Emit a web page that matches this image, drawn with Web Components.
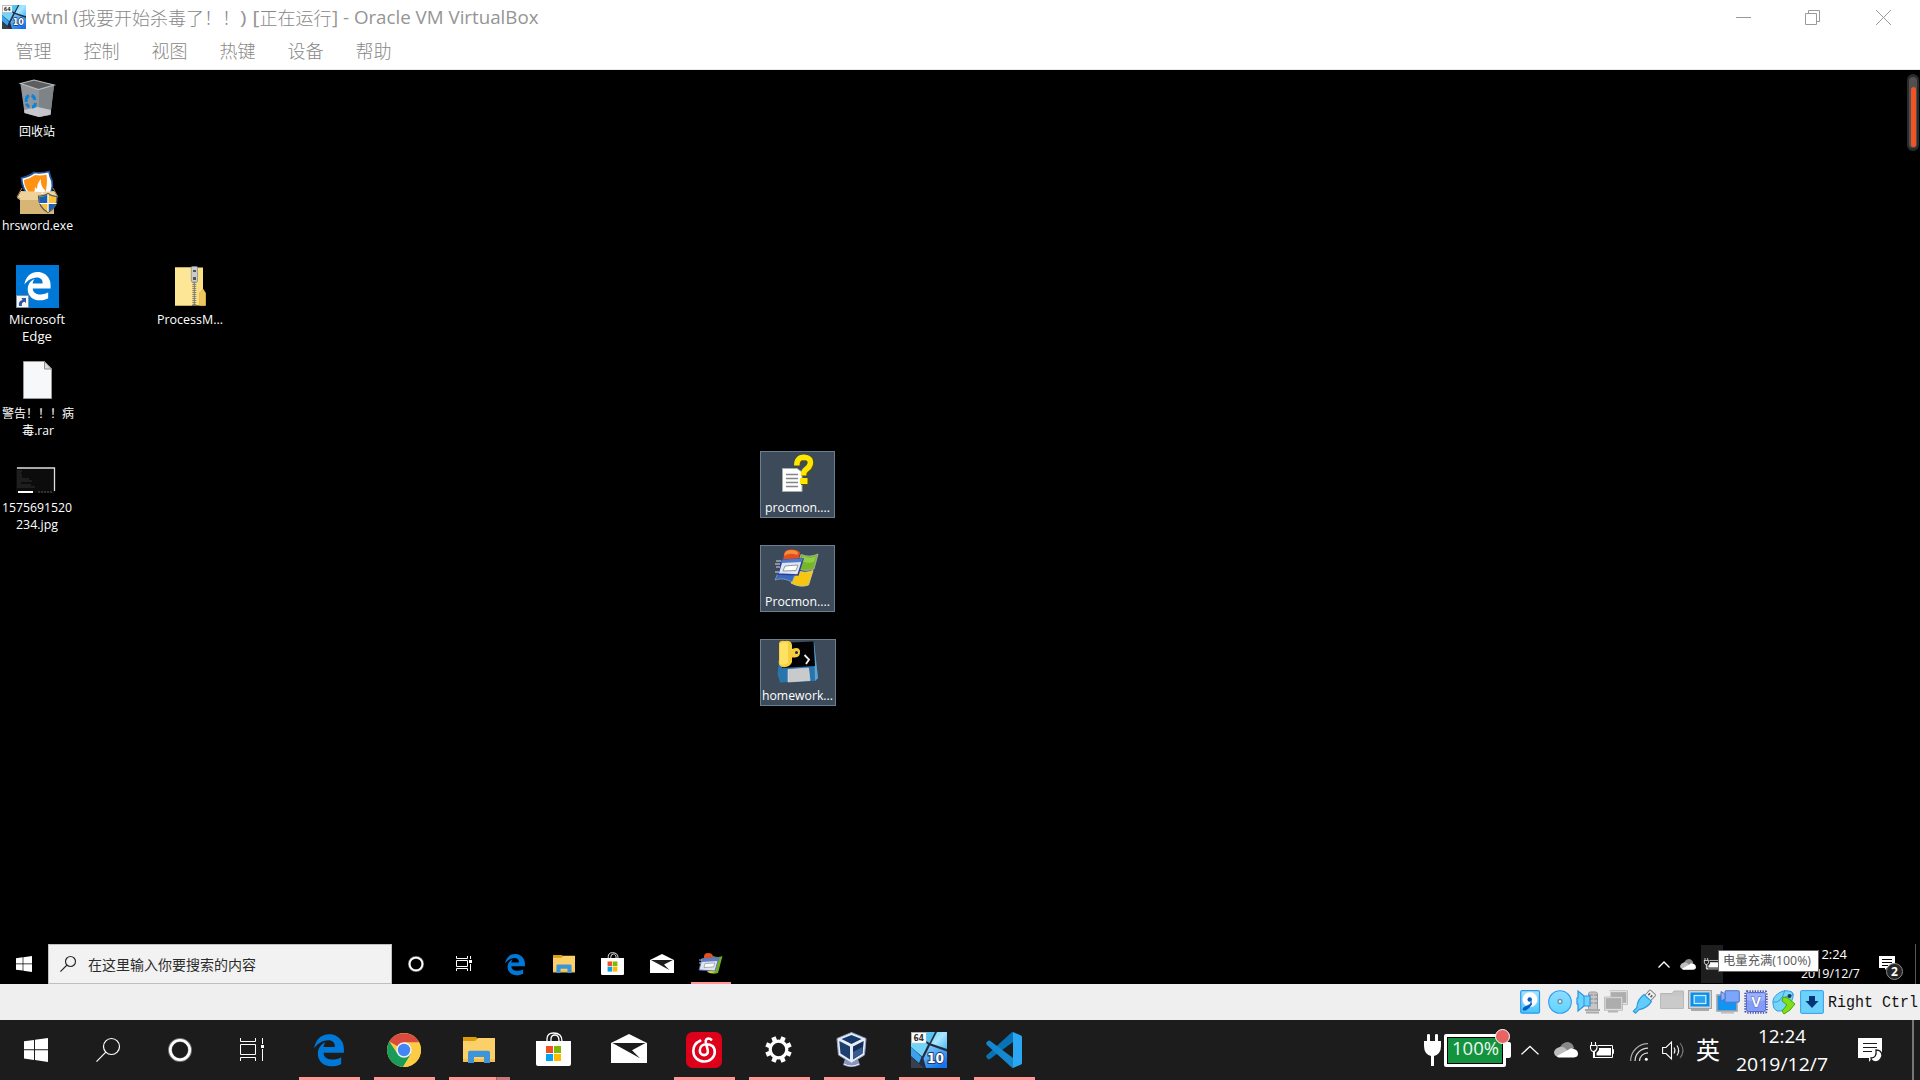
<!DOCTYPE html>
<html lang="zh-CN">
<head>
<meta charset="utf-8">
<title>wtnl - Oracle VM VirtualBox</title>
<style>
html,body{margin:0;padding:0;width:1920px;height:1080px;overflow:hidden;background:#000}
</style>
</head>
<body>
<desktop-screen></desktop-screen>
<script>
const EDGE='M25.714 228.163c.111-.162.23-.323.342-.485-.021.162-.045.323-.065.485H25.714zm460.572 15.508c0-44.032-7.754-84.465-28.801-122.405C416.498 47.879 343.912 8.001 258.893 8.001 118.962 7.724 40.617 113.214 26.056 227.679c42.429-61.312 117.073-121.376 220.375-124.966 0 0 109.666 0 99.419 104.957H169.997c6.369-37.386 18.554-58.986 34.339-78.926-75.048 34.893-121.85 96.096-120.742 188.315.83 71.448 50.124 144.836 120.743 171.976 83.357 31.847 192.776 7.2 240.132-21.324V363.307c-80.864 56.494-270.871 60.925-272.255-67.572h314.073v-52.064z';
const WINFLAG=`<path d="M24 5Q24 1 31 .5Q39 .5 40 4L38 12H23Z" fill="#e2501c"/><path d="M25 4Q26 1 31 1Q37 1 38 4L37 6Q30 3 24 7Z" fill="#f98c3c"/>
<path d="M41 5.500Q50 9 58 5L54 20Q46 23 37 19.500Z" fill="#76b72a" stroke="#a9b3a3" stroke-width=".9"/><path d="M43 7Q50 10 56 7.500L54 13Q48 15 41 12Z" fill="#93cd45"/><path d="M37 21.500Q45 25 53 21.500L48.500 36Q40 39 31 34Z" fill="#f6c611" stroke="#d8ce98" stroke-width=".9"/>
<path d="M18 24L35 26L32 33Q23 28 15 31Z" fill="#3969bb" stroke="#93a6c8" stroke-width=".7"/><path d="M22 11L43 10L38 26L18 25Z" fill="#dfe5f2" stroke="#2a3e99" stroke-width="1.500"/><path d="M22 10.500L43 9.500L42 13L21 14Z" fill="#5177c8"/><path d="M25 17L38 16L36 21.500L23 22Z" fill="#fff" stroke="#8b9b9b" stroke-width="1"/>
<path d="M16 12h5M15 15h5M16 18h4M15 23h4" stroke="#d6dde0" stroke-width="1"/>`;
const I={
vm:['0 0 36 36',`<defs><linearGradient id="g" x1="0" y1="0" x2="1" y2="1"><stop offset="0" stop-color="#6ad0f6"/><stop offset=".45" stop-color="#a9e8ff"/><stop offset="1" stop-color="#4db6f6"/></linearGradient><linearGradient id="k" x1="0" y1="0" x2=".6" y2="1"><stop offset="0" stop-color="#8bd6fb"/><stop offset="1" stop-color="#1573ee"/></linearGradient></defs><rect width="36" height="36" rx="1" fill="#222c42"/><path d="M0 11H15L17 12.500L11 24.500L0 15Z" fill="#74d3f8"/><path d="M15 0H24L18.500 11L15 9Z" fill="#58c3ee"/><path d="M26 0H36V17L20 11.500Z" fill="url(#g)"/><path d="M19 13.500L36 19.500V36H15L12.500 26.500Z" fill="url(#k)"/><path d="M0 15L10.500 25L8 31L0 24Z" fill="#3aa2ef"/><path d="M0 25L13 36H0Z" fill="#39404d"/><rect x=".5" y=".5" width="14.500" height="10.500" fill="#fff" stroke="#ccc" stroke-width=".5"/><text x="2.500" y="9.300" font-family="DejaVu Sans" font-weight="bold" font-size="8.500" textLength="10.500" lengthAdjust="spacingAndGlyphs" fill="#333">64</text><text x="16" y="30.500" font-family="DejaVu Sans" font-weight="bold" font-size="14" textLength="17" lengthAdjust="spacingAndGlyphs" fill="#fff" stroke="#1e3868" stroke-width="2" paint-order="stroke">10</text>`],
win:['0 0 24 24',`<path fill="#fff" d="M0 3.3L10 2V11.3H0ZM11 1.8L24 0V11.3H11ZM0 12.3H10V21.9L0 20.5ZM11 12.3H24V24L11 22.1Z"/>`],
search:['0 0 24 24',`<g fill="none" stroke="currentColor" stroke-width="1.2"><circle cx="15.5" cy="8.5" r="8"/><path d="M9.8 14.2L.5 23.7"/></g>`],
search2:['0 0 16 16',`<g fill="none" stroke="currentColor" stroke-width="1.2"><circle cx="10.5" cy="5.5" r="5"/><path d="M7 9L.4 15.6"/></g>`],
ring:['0 0 24 24',`<circle cx="12" cy="12" r="10" fill="none" stroke="#777" stroke-width="4"/><circle cx="12" cy="12" r="9.7" fill="none" stroke="#fff" stroke-width="2.6"/>`],
tasks:['0 0 24 24',`<g fill="none" stroke="#fff" stroke-width="1"><path d="M.5 0V3.5H15.5V0M.5 23V19.5H15.5V23M.5 6.5H15.5V16.5H.5ZM22.5 0V6M22.5 11V23"/><path d="M21 7h3v3h-3z" fill="#fff" stroke="none"/></g>`],
tasks2:['0 0 16 16',`<g fill="none" stroke="#fff" stroke-width="1"><path d="M.5 0V2.5H11.5V0M.5 15V12.5H11.5V15M.5 4.5H11.5V10.5H.5ZM14.5 0V3M14.500 8V15"/><path d="M13 4h3v3h-3z" fill="#fff" stroke="none"/></g>`],
edge:['24 6 464 494',`<path fill="#0078d7" d="${EDGE}"/>`],
explorer:['0 0 32 26',`<path d="M0 0H13L16 3V8H0Z" fill="#dd9a09"/><path d="M0 4H12L15 1H32V25H0Z" fill="#fbd068"/><path d="M0 22H32V25H0Z" fill="#f3c04f"/><path d="M5 26V15.5Q5 13.7 7 13.7H25Q27 13.7 27 15.5V26H21V20H11V26Z" fill="#3c95da"/>`],
store:['0 0 35 34',`<g fill="none" stroke="#fff" stroke-width="1.3"><path d="M11 10V7Q11 1 17.5 1Q26 1 26 9M15 10V7Q15 3 19 3Q23 3 23 9"/></g><path d="M0 9H35V32Q35 34 33 34H2Q0 34 0 32Z" fill="#fff"/><path fill="#f25022" d="M10 14h7v7h-7z"/><path fill="#7fba00" d="M18 14h7v7h-7z"/><path fill="#00a4ef" d="M10 22h7v7h-7z"/><path fill="#ffb900" d="M18 22h7v7h-7z"/>`],
mail:['0 0 36 29',`<path fill="#fff" d="M0 9L18 0L36 9V29H0Z"/><path fill="#1c1c1c" d="M1.500 9H34.500L21 16.200L29 24.300Z"/>`],
chrome:['0 0 34 34',`<circle cx="17" cy="17" r="17" fill="#fccb3f"/><path d="M17 17L2.3 8.5A17 17 0 0 1 31.7 8.7L32.2 9.5H17Z" fill="#db4a3e"/><path d="M2.3 8.5A17 17 0 0 0 16 34L24 21L10 20Z" fill="#179c59"/><path d="M17 9.5H32.2A17 17 0 0 1 16 34L24 21Z" fill="#fdcc44"/><circle cx="17" cy="17" r="7.7" fill="#f1f1f1"/><circle cx="17" cy="17" r="6.2" fill="#4285f4"/>`],
netease:['0 0 36 36',`<rect width="36" height="36" rx="6.5" fill="#dd001b"/><path fill="none" stroke="#fff" stroke-width="2.6" stroke-linecap="round" d="M14.2 8.7C9.6 10.8 7.3 14.6 7.3 19C7.3 25 12 29.5 18.3 29.5C24.2 29.5 28.8 25 28.8 20C28.8 14.5 25 12.2 20.7 12.2C16.4 12.2 13.8 15 13.8 18.5C13.8 21.4 15.8 23.1 18.1 23.1C20.5 23.1 22.3 21.2 21.8 18.5L19.8 10.2C19.3 7.7 20.9 6.5 22.7 6.5C23.9 6.5 24.7 7 25.2 7.6"/>`],
gear:['0 0 27 27',`<circle cx="13.5" cy="13.5" r="8.3" fill="none" stroke="#fff" stroke-width="3.2"/><g stroke="#fff" stroke-width="4.6">${[22.5,67.5,112.5,157.5,202.5,247.5,292.5,337.5].map(a=>`<path d="M13.5 .2V4.6" transform="rotate(${a} 13.5 13.5)"/>`).join('')}</g>`],
vbox:['0 0 31 35',`<path d="M9 27L22 27L24 33Q15 37 7 33Z" fill="#8796bd"/><path d="M8 32Q15 36 23 32" stroke="#eef" fill="none"/><path d="M15.5 .5L30 6.5L28.5 23L15.5 31L2.5 23L1 6.5Z" fill="#e7edf7" stroke="#8fa1c5" stroke-width="1"/><path d="M15.5 3L25.5 7L15.5 12L5.5 7Z" fill="#16396c"/><path d="M3.3 9L14 14.5V27.5L4.5 21.5Z" fill="#1d3f70"/><path d="M27.7 9L17 14.5V27.5L26.5 21.5Z" fill="#132f5a"/><path d="M17 27V20L26.5 15V21.5Z" fill="#365b91"/>`],
code:['0 0 36 36',`<path d="M27 0L35 3.5Q36 4 36 5V31Q36 32 35 32.5L27 36Z" fill="#2aa6f2"/><path d="M27 10L4 27Q3 27.8 2 27L.5 25.5Q-.3 24.2.7 23.2L25.5 .6L27 0Z" fill="#0673b7"/><path d="M27 26L4 8.8Q3 8.2 2 9L.5 10.5Q-.3 11.7.7 12.7L25.5 35.3L27 36Z" fill="#1588cd"/>`],
plug:['0 0 17 33',`<path fill="#fff" d="M3 1Q3 0 4.5 0T6 1V7H11V1Q11 0 12.5 0T14 1V7H17V12Q17 20 10 22V32H7V22Q0 20 0 12V7H3Z"/>`],
chev:['0 0 18 11',`<path d="M.5 10.3L9 1.5L17.5 10.3" fill="none" stroke="#fff" stroke-width="1.5"/>`],
chev2:['0 0 12 7',`<path d="M.5 6.500L6 1L11.500 6.500" fill="none" stroke="#fff" stroke-width="1.400"/>`],
cloud:['0 0 24 16',`<path d="M6 5Q9 0 14 0Q19 1 20 6L12 9L2 8Z" fill="#888"/><path d="M4 15Q0 14 0 10Q1 6 6 5Q10 4 13 8L20 11L13 15Z" fill="#bdbdbd"/><path d="M3 14L14 8Q17 5 20 7Q24 8 24 12Q24 15 20 15.5H5Q3.7 15.5 3 14Z" fill="#fff"/>`],
batt:['0 0 24 17',`<g fill="none" stroke="#fff"><path d="M8 3.5H22.5V15.5H4.5V10M22.5 7.5H23.5V11.5H22.5" stroke-width="1"/><path d="M1.5 0V3M5.5 0V3M0 3.5H7V6Q6 9.5 3.5 9.5Q1 9.5.5 6V3.5M3.5 9V15.5H6" stroke-width="1.1"/></g><path d="M9 6H21V13.5H6.5V11L9 8Z" fill="#fff"/>`],
wifi:['0 0 18 18',`<g fill="none"><path d="M.6 18A17.5 17.5 0 0 1 18 .6" stroke="#aaa" stroke-width="1.2"/><path d="M5 18A13 13 0 0 1 18 5.2M9.5 18A8.5 8.5 0 0 1 18 9.8" stroke="#ddd" stroke-width="1.2"/></g><circle cx="16.3" cy="16.3" r="1.5" fill="#fff"/>`],
sound:['0 0 23 19',`<path d="M.6 6.5H4L9.5 1V18L4 12.5H.6Z" fill="none" stroke="#fff" stroke-width="1.1"/><g fill="none" stroke-width="1.1"><path d="M12 6.5Q14 9.5 12 12.5M15 4.5Q18.3 9.5 15 14.5" stroke="#eee"/><path d="M18 2Q24 9.5 18 17" stroke="#777"/></g>`],
note:['0 0 24 25',`<path d="M0 0H24V20H14L11 24V20H0Z" fill="#fff"/><path d="M5 5.5H19M5 9.5H19M5 13.5H14" stroke="#1c1c1c"/><path d="M18 12Q24 12 24 18Q22 24 17 24Q13 23 13 20Q19 20 18 12Z" fill="#fff" stroke="#1c1c1c" stroke-width="1.3"/>`],
note2:['0 0 28 28',`<path d="M2 2H18V14H10L8 16V14H2Z" fill="#fff"/><path d="M5 5.5H15M5 8.5H15M5 11.5H11" stroke="#000"/><circle cx="17.5" cy="17.5" r="8" fill="#252525" stroke="#8c8c8c" stroke-width="1"/><text x="17.5" y="21.8" text-anchor="middle" font-family="Open Sans" font-size="12" font-weight="bold" fill="#fff">2</text>`],
disk:['0 0 24 24',`<defs><linearGradient id="g" x2="0" y2="1"><stop stop-color="#a5e5ff"/><stop offset="1" stop-color="#45c6fb"/></linearGradient></defs><rect x=".7" y=".7" width="18.800" height="22.5" rx="1.5" fill="url(#g)" stroke="#2c98ea" stroke-width="1.2"/><circle cx="10" cy="9.5" r="7.700" fill="#fff" stroke="#9cd0f3" stroke-width=".6"/><circle cx="9.700" cy="9.5" r="2.2" fill="#0760c4"/><path d="M3 20.500Q1.500 18 5 16.500L10 14L11.300 10L12 14.500Q9 19 6 20.5Z" fill="#0760c4"/>`],
cd:['0 0 24 24',`<defs><linearGradient id="g" x2="0" y2="1"><stop stop-color="#8ddcff"/><stop offset="1" stop-color="#5fd5ff"/></linearGradient></defs><circle cx="12" cy="12" r="11.3" fill="url(#g)" stroke="#329ceb" stroke-width="1.1"/><circle cx="12" cy="11.5" r="2" fill="#eef7fb" stroke="#6b91a6" stroke-width="1.3"/>`],
audio:['0 0 24 24',`<rect x="12.5" y="2" width="9" height="18" rx="2" fill="#c6c6c6" stroke="#999"/><path d="M12 5h5M12 9h5M12 13h5M18 5h4M18 9h4M18 13h4" stroke="#888"/><path d="M9 20H24M10 22.5H23" stroke="#aaa" stroke-width="1.8"/><path d="M1 8H2V1L8 6H14V16H8L2 21V14H1Z" fill="#67d3ff" stroke="#3190df" stroke-width="1.2"/><path d="M8 6V16" stroke="#3190df"/>`],
net:['0 0 24 24',`<g fill="#adadad" stroke="#e9e9e9" stroke-width="1.2"><rect x="6" y="1.5" width="17" height="12"/><rect x="1" y="7.5" width="17" height="12"/></g><path d="M5.5 .7H23.5V14.5H19M.5 7H18.5V20.3H.5Z" fill="none" stroke="#b3b3b3" stroke-width=".8"/><path d="M4 21.5H14" stroke="#b5b5b5" stroke-width="2"/>`],
usb:['0 0 24 24',`<g transform="rotate(43 12 12)"><rect x="8" y="-1.200" width="8" height="8" rx="1" fill="#f2f2f2" stroke="#888"/><path d="M10.500 1.500V4M13.500 1.500V4" stroke="#555" stroke-width="1.500"/><path d="M7 6.500H17Q18.800 14 13.500 21V26H10.500V21Q5.200 14 7 6.500Z" fill="#62cdfb" stroke="#3198df" stroke-width="1.2"/></g>`],
folder:['0 0 24 24',`<path d="M.6 3.5H12L14 1H23.4V18.4H.6Z" fill="#c6c6c6" stroke="#b5b5b5"/><path d="M1 6H23V18H1Z" fill="#cacaca"/>`],
display:['0 0 24 24',`<rect x=".6" y=".6" width="22.8" height="17.8" fill="#d9d9d9" stroke="#999"/><path d="M3 20H21" stroke="#aaa" stroke-width="2"/><rect x="2.5" y="2.5" width="19" height="14" fill="#0a8de9"/><rect x="6.2" y="5.5" width="11.6" height="8" fill="#26a3f3" stroke="#c6e9ff" stroke-width="1.3"/>`],
rec:['0 0 24 24',`<rect x="1" y="5" width="20" height="16" fill="#1494f2" stroke="#a5a5a5" stroke-width="1.6"/><path d="M5 22.8H18" stroke="#bbb" stroke-width="1.5"/><rect x="9" y=".7" width="14.3" height="11.5" rx=".8" fill="#7aa6fb" stroke="#5573c1"/><path d="M5 1.5L9 4V9L5 11Z" fill="#8eb1f9" stroke="#5573c1"/>`],
cpu:['0 0 24 24',`<rect x="1.4" y="1.4" width="21.2" height="21.2" rx="1.500" fill="none" stroke="#4754ae" stroke-width="2.2" stroke-dasharray="1.3 1.300"/><rect x="2.5" y="2.5" width="19" height="19" rx="2" fill="#829cf8" stroke="#5a69cc"/><path d="M3 3.500H21V10Q12 13 3 10Z" fill="#9bb1fc"/><text x="12" y="17" text-anchor="middle" font-family="Liberation Sans" font-weight="bold" font-size="14.500" fill="#fff" stroke="#5767ba" stroke-width="1" paint-order="stroke">V</text>`],
mouse:['0 0 24 24',`<path d="M1 14Q0 7 7 3Q13-1 20 2Q23 6 18 14Q13 22 5 21Q1 19 1 14Z" fill="#75d6fa" stroke="#369de3"/><path d="M1 12Q9 14 13 0M13 7Q18 7 22 4" stroke="#369de3" fill="none"/><circle cx="17.5" cy="6" r="2" fill="#123c65"/><path d="M11 7L16 8L23 14L18 20L12 24L10 21L15 15L10 11Z" fill="#80df17" stroke="#48a808"/>`],
down:['0 0 24 24',`<rect x=".6" y=".6" width="22.8" height="22.8" rx="1" fill="#6bd2fc" stroke="#3d9de9"/><path d="M9 6H15V11H18.500L12 18L5.500 11H9Z" fill="#063575"/>`],
/* compact process-monitor glyph for the small taskbar */
flag:['0 0 24 22',`<path d="M5 4Q5 0 9 0Q14 0 14 4V6H5Z" fill="#e8501a"/><path d="M14 3Q19 5 23.500 3L19 20Q14 22 8 19L12 8Z" fill="#6fae22"/><path d="M19 8L16 19Q12 21 9 19L12 15Z" fill="#f0dc1c"/><path d="M3 5.500L20 4.500L16 18L0 17Z" fill="#dde4f1" stroke="#4b60a8" stroke-width=".9"/><path d="M3 5.500L20 4.500L19 8L2 9Z" fill="#5f7cc6"/><path d="M6 10.500L16 10L14.500 14L5 14.500Z" fill="#fff" stroke="#999" stroke-width=".8"/><path d="M0 7h3M0 10h2" stroke="#ccc" stroke-width=".9"/>`],
/* Desktop icons share one 75x48 canvas: the upper part of a desktop tile */
bin:['0 0 75 48',`<path d="M20.500 9L38 14L54 10L50.500 40L39 42L24.500 38Z" fill="#92969a"/><path d="M39 14L54 10L50.500 39.500L39 42Z" fill="#7e8387"/><path d="M20.500 8.500L34 5L54 10L38.500 14.500Z" fill="#5d5e60" stroke="#b7bbbd" stroke-width="1.200"/><path d="M24 35L38 32L51 35L50.500 39.500L39 42L24.500 38Z" fill="#cfd1d3" opacity=".85"/><path d="M26.300 27Q25.500 22 29 20.500M31.500 20.500Q34.500 21.500 34.800 25M35.500 28Q35 32 32 32M29.500 31.500Q27 31 26.500 28.500" fill="none" stroke="#0c83d9" stroke-width="3"/>`],
hr:['0 0 75 48',`<path d="M21.500 9Q30 7 34 3.500Q42 4.500 49 2.500Q50 8 52 12Q54 22 46 31L30 29Q22 20 21.500 9Z" fill="#fff" stroke="#1c5599" stroke-width="1.700"/><path d="M24 11Q31 9 35 6Q41 7 46.500 5.500Q48 15 45 25H30Q24 18 24 11Z" fill="#ff9212"/><path d="M33 26Q35 22 35 18L37 20Q37 14 41 10Q40 17 45 21L46 26Z" fill="#fff"/><path d="M20 25H54V45H20Z" fill="#d7b574"/><path d="M21 22L17 29L20 31H40L42 23ZM42 23L54 22L58 28L50 32Z" fill="#efd29a"/><path d="M20 30L17 28L22 19M53 19L58 28" stroke="#a18754" fill="none"/><path d="M38.500 27Q45 27 48 24.500Q51 27 57 27.500Q58 38 48 43.500Q38 38 38.500 27Z" fill="#fac23b" stroke="#4c5b67" stroke-width="1.2"/><path d="M39.200 28Q45 27.500 47.400 25.500V34H40Q39 31 39.200 28ZM48.500 35H55.5Q53.5 40 48.5 42.500Z" fill="#1561ba"/><path d="M48 25V43M39.500 34.5H56.500" stroke="#fff" stroke-width="1.1"/>`],
edgebig:['0 0 75 48',`<rect x="16" y="2" width="43" height="43" fill="#0078d7"/><svg x="24" y="9" width="27" height="28" viewBox="24 6 464 494"><path fill="#fff" d="${EDGE}"/></svg><rect x="16.500" y="32.500" width="12" height="12" fill="#f5f5f5" stroke="#888" stroke-width=".7"/><path d="M19 43Q18 38 22.500 37L21.500 35H26V40L24.500 38.700Q21 39.500 22 43Z" fill="#31579d"/>`],
zip:['0 0 75 48',`<path d="M23 4.500H51V27L53.500 30V42.500H23Z" fill="#fbdf85"/><path d="M23 4.500H40V42.500H23Z" fill="#fde796"/><path d="M47.500 42.500V30L51 26L53.500 30V42.500Z" fill="#eec85e" stroke="#ddb14a" stroke-width=".6"/><path d="M42.300 19V42.500" stroke="#8e8e80" stroke-width="4" stroke-dasharray="1 1"/><path d="M42.300 19V42.500" stroke="#777" stroke-width="1"/><rect x="39.300" y="3.500" width="6.200" height="15.500" rx="1" fill="#c9cbcc" stroke="#858585" stroke-width=".7"/><path d="M41 14h3v3h-3zM41 7h3v2h-3z" fill="#555"/>`],
doc:['0 0 75 48',`<path d="M23.500 4.500H44.500L51.500 12V41.500H23.500Z" fill="#f7f8f9" stroke="#999"/><path d="M44.500 4.500V12H51.500Z" fill="#ddd" stroke="#8f8f8f"/>`],
shot:['0 0 75 48',`<rect x="16" y="16" width="39" height="26" fill="#0c0c0c"/><path d="M17 17H54.500V40" fill="none" stroke="#ddd" stroke-width="1.300"/><path d="M18 41H33" stroke="#fff" stroke-width="2"/><path d="M38 41H53" stroke="#555" stroke-dasharray="2 1"/><path d="M17 20h5M17 22h4M17 24h5M17 26h5M17 28h12M17 30h15M17 32h4M17 34h14M17 36h18" stroke="#3b3b3b" stroke-width=".8"/>`],
help:['0 0 75 48',`<path d="M22.500 17.500H37L42 21V40.500H22.500Z" fill="#fff" stroke="#ababab"/><path d="M26 23.500H38M26 27.500H38M26 31.500H38M26 35.500H38" stroke="#858585" stroke-width="1.300"/><path d="M37.500 15Q37 7 44.500 6.800Q51.500 7 51 13Q50 17 46.500 19Q44.500 20.500 44.500 25" fill="none" stroke="#615400" stroke-width="6"/><path d="M36.800 14.500Q36.500 6.500 44 6.300Q51 6.500 50.300 12.500Q49.500 16.500 46 18.500Q43.500 20 43.500 24.500" fill="none" stroke="#ffe600" stroke-width="5.500"/><path d="M41 28h7.500v6h-7.500z" fill="#615400"/><path d="M40 27h7.500v6h-7.500z" fill="#ffe600"/>`],
flagbig:['0 0 75 48',`<g transform="translate(0 4)">${WINFLAG}</g>`],
py:['0 0 75 48',`<path d="M21 5L54 3L58 39L55 42L20 43.500L17.500 35Z" fill="#2974aa"/><path d="M54 3L58 39L55 42Z" fill="#5ca4d2"/><path d="M21 4L53.500 2.500L55 27L22 29Z" fill="#020204"/><path d="M28 30.500L48.500 29L50 41.500L28 43Z" fill="#c9cacc" stroke="#e4e4e4" stroke-width=".6"/><path d="M19 4Q20 1 25 2Q31 1 32 6V10Q39 7 40 12Q40.500 18 35 18.500H32V23Q30 29 22 28Q17.500 26 19 21Z" fill="#f7cf3d"/><path d="M20 5Q24 2 28 4V24Q24 27 20 25Z" fill="#ffe263"/><circle cx="36.500" cy="13.500" r="1.500" fill="#16334c"/><path d="M44.500 16L49 20.500L46 25" stroke="#f1f1f1" stroke-width="1.800" fill="none"/>`],
min:['0 0 15 15',`<path d="M0 7.500H15" stroke="#999"/>`],
max:['0 0 15 15',`<path d="M.5 3.500H11.500V14.500H.5ZM3.500 3V.5H14.500V11.500H12" stroke="#999" fill="none"/>`],
close:['0 0 15 15',`<path d="M0 0L15 15M15 0L0 15" stroke="#999"/>`]
};
const FONT='"Open Sans","Noto Sans CJK SC",sans-serif';

/* ui-icon: name, width and height pick and size one inline drawing */
customElements.define('ui-icon',class extends HTMLElement{
  connectedCallback(){
    const [vb,body]=I[this.getAttribute('name')],w=this.getAttribute('w'),h=this.getAttribute('h')||w;
    this.attachShadow({mode:'open'}).innerHTML=`<style>:host{display:block;flex:none;width:${w}px;height:${h}px}svg{display:block;overflow:visible}</style><svg width="${w}" height="${h}" viewBox="${vb}" preserveAspectRatio="none">${body}</svg>`;
  }
});
/* fit-text: one line of text set to an exact advance width */
customElements.define('fit-text',class extends HTMLElement{
  connectedCallback(){
    const w=+this.getAttribute('w');
    this.attachShadow({mode:'open'}).innerHTML=`<style>:host{display:block;flex:none;width:${w}px;white-space:pre}span{display:inline-block;transform-origin:0 0}</style><span><slot></slot></span>`;
    const s=this.shadowRoot.querySelector('span'),n=s.getBoundingClientRect().width;
    if(n)s.style.transform=`scaleX(${w/n})`;
  }
});
customElements.define('window-header',class extends HTMLElement{
  connectedCallback(){
    this.attachShadow({mode:'open'}).innerHTML=`<style>
:host{display:block;height:69px;background:#fff;border-bottom:1px solid #e8e8e8;color:#959595;font:18px/24px ${FONT}}
.t{display:flex;height:34px;align-items:center;padding-left:2px;box-sizing:border-box}
.n{display:flex;margin-left:4.500px}.n .c{font-family:"Noto Sans CJK SC",sans-serif;font-weight:300;color:#888}
.b{margin-left:auto;display:flex;padding-right:29px;gap:56px}.b ui-icon:first-child{margin-right:-2px}
nav{display:flex;gap:32px;padding:3px 0 0 15.500px;line-height:26px;font-size:18px;font-family:"Noto Sans CJK SC",sans-serif;font-weight:300;color:#888}
</style><div class="t"><ui-icon name="vm" w="24"></ui-icon><div class="n"><fit-text w="47.5">wtnl (</fit-text><fit-text class="c" w="162">我要开始杀毒了！！</fit-text><fit-text w="19.5">) [</fit-text><fit-text class="c" w="72">正在运行</fit-text><fit-text w="206.5">] - Oracle VM VirtualBox</fit-text></div>
<div class="b"><ui-icon name="min" w="15"></ui-icon><ui-icon name="max" w="15"></ui-icon><ui-icon name="close" w="15"></ui-icon></div></div>
<nav>${['管理','控制','视图','热键','设备','帮助'].map(x=>`<fit-text w="36">${x}</fit-text>`).join('')}</nav>`;
  }
});
/* desktop-item: an icon placed on the desktop by column and row */
customElements.define('desktop-item',class extends HTMLElement{
  connectedCallback(){
    const g=n=>this.getAttribute(n);
    this.attachShadow({mode:'open'}).innerHTML=`<style>
:host{position:absolute;box-sizing:border-box;left:${152*g('col')}px;top:${5+94*g('row')}px;width:75px;height:67px;color:#fff;font:12px/17px ${FONT}}
:host([sel]){background:#3c4a59;box-shadow:inset 0 0 0 1px #6c7f90}
:host([wide]){width:76px}
.l{display:flex;flex-direction:column;align-items:center;width:74px}
:host([even]) .l{width:76px}</style>
<ui-icon name="${g('icon')}" w="75" h="48"></ui-icon><div class="l"><slot></slot></div>`;
  }
});
customElements.define('guest-desktop',class extends HTMLElement{
  connectedCallback(){
    this.attachShadow({mode:'open'}).innerHTML=`<style>
:host{display:block;position:relative;height:874px;background:#000}
.m{position:absolute;right:1px;top:4px;width:12px;height:77px;border-radius:6px;background:#2b2b2b;box-sizing:border-box;padding:3px 2px}
.m div{height:71px;border-radius:4px;background:#505050;padding:10px 1.500px 0 2px;box-sizing:border-box}.m i{display:block;height:60px;border-radius:3px;background:#f05423}
</style>
<desktop-item col="0" row="0" icon="bin"><fit-text w="36">回收站</fit-text></desktop-item>
<desktop-item col="0" row="1" icon="hr"><fit-text w="71">hrsword.exe</fit-text></desktop-item>
<desktop-item col="0" row="2" icon="edgebig"><fit-text w="56">Microsoft</fit-text><fit-text w="30">Edge</fit-text></desktop-item>
<desktop-item col="1" row="2" icon="zip" even><fit-text w="66">ProcessM...</fit-text></desktop-item>
<desktop-item col="0" row="3" icon="doc" even><fit-text w="72">警告！！！病</fit-text><fit-text w="32">毒.rar</fit-text></desktop-item>
<desktop-item col="0" row="4" icon="shot"><fit-text w="70">1575691520</fit-text><fit-text w="42">234.jpg</fit-text></desktop-item>
<desktop-item col="5" row="4" icon="help" sel><fit-text w="65">procmon....</fit-text></desktop-item>
<desktop-item col="5" row="5" icon="flagbig" sel><fit-text w="65">Procmon....</fit-text></desktop-item>
<desktop-item col="5" row="6" icon="py" sel wide><fit-text w="71">homework...</fit-text></desktop-item>
<div class="m"><div><i></i></div></div>`;
  }
});
/* task-button: one taskbar cell, with a running indicator when "on" is set */
customElements.define('task-button',class extends HTMLElement{
  connectedCallback(){
    const u=this.getAttribute('u')||61;
    this.attachShadow({mode:'open'}).innerHTML=`<style>
:host{display:flex;flex:none;align-items:center;justify-content:center;position:relative;height:100%;width:${this.getAttribute('cell')}px}
i{display:none;position:absolute;bottom:0;left:calc(50% - ${u/2}px);width:${u}px;height:${u<50?2:3}px;background:#ff9797}
:host([on]) i{display:block}:host([multi]) i{background:linear-gradient(90deg,#ff9797 47px,#a46161 47px,#a46161 48px,#c77777 48px)}
</style><slot></slot><i></i>`;
  }
});
customElements.define('guest-taskbar',class extends HTMLElement{
  connectedCallback(){
    this.attachShadow({mode:'open'}).innerHTML=`<style>
:host{display:flex;height:40px;background:#000;align-items:center;color:#fff;font:12px/19px ${FONT};position:relative}
.s{display:flex;align-items:center;box-sizing:border-box;width:344px;height:40px;background:#f2f2f2;border:1px solid #bfbfbf;padding-left:11px;color:#2b2b2b;font-size:14px;gap:12px}
.r{margin-left:auto;display:flex;align-items:center;height:40px}
.b{width:22px;height:38px;margin-left:5px;background:#1e1e1e;display:flex;align-items:center;padding-left:3px;box-sizing:border-box}
.c{width:59px;height:38px;margin-left:78px;display:flex;flex-direction:column;align-items:center}
.n{margin-left:17px}.e{width:1px;height:40px;margin:0 4px 0 10px;background:#555}
.tip{position:absolute;left:1718px;top:6px;width:101px;height:22px;box-sizing:border-box;border:1px solid #666;background:#fff;color:#575757;padding-left:4px;line-height:19px}
</style>
<task-button cell="48"><ui-icon name="win" w="16"></ui-icon></task-button>
<div class="s"><ui-icon name="search2" w="16"></ui-icon><fit-text w="168">在这里输入你要搜索的内容</fit-text></div>
<task-button cell="48"><ui-icon name="ring" w="16"></ui-icon></task-button>
<task-button cell="48"><ui-icon name="tasks2" w="16"></ui-icon></task-button>
<task-button cell="54"><ui-icon name="edge" w="20" h="21"></ui-icon></task-button>
<task-button cell="44"><ui-icon name="explorer" w="22" h="18"></ui-icon></task-button>
<task-button cell="53"><ui-icon name="store" w="23" h="23" style="margin-bottom:2px"></ui-icon></task-button>
<task-button cell="46"><ui-icon name="mail" w="24" h="19" style="margin-bottom:1px"></ui-icon></task-button>
<task-button cell="52" on u="40"><ui-icon name="flag" w="24" h="22"></ui-icon></task-button>
<div class="r"><ui-icon name="chev2" w="12" h="7"></ui-icon><ui-icon name="cloud" w="16" h="11" style="margin-left:10px"></ui-icon><div class="b"><ui-icon name="batt" w="16" h="12"></ui-icon></div>
<div class="c"><fit-text w="33">12:24</fit-text><fit-text w="59">2019/12/7</fit-text></div><ui-icon class="n" name="note2" w="28" style="margin-top:7px"></ui-icon><div class="e"></div></div>
<div class="tip"><fit-text w="88">电量充满(100%)</fit-text></div>`;
  }
});
customElements.define('vm-statusbar',class extends HTMLElement{
  connectedCallback(){
    this.attachShadow({mode:'open'}).innerHTML=`<style>
:host{display:flex;height:36px;box-sizing:border-box;background:#efefef;justify-content:flex-end;align-items:center;gap:4px;padding:0 2px 1px 0;color:#111;font:17px/20px "Liberation Mono",monospace}
fit-text{margin-top:3px}
</style>${['disk','cd','audio','net','usb','folder','display','rec','cpu','mouse','down'].map(n=>`<ui-icon name="${n}" w="24"></ui-icon>`).join('')}<fit-text w="90">Right Ctrl</fit-text>`;
  }
});
customElements.define('host-taskbar',class extends HTMLElement{
  connectedCallback(){
    const app=(n,w,h,a='on',r=1,b=0)=>`<task-button cell="75" ${a}><ui-icon name="${n}" w="${w}" h="${h}" style="margin:0 ${r}px ${b}px 0"></ui-icon></task-button>`;
    this.attachShadow({mode:'open'}).innerHTML=`<style>
:host{display:flex;height:60px;background:#1c1c1c;align-items:center;color:#fff;font:18.500px/27px ${FONT}}
.a{display:flex;height:60px;margin-left:4px}.r{margin-left:auto;display:flex;align-items:center;height:60px}
.bat{position:relative;width:62px;height:33px;box-sizing:border-box;margin:0 5px 0 3px;border:3px solid #fff;border-radius:2px;background:#000;padding:1px}
.g{height:25px;background:#13933f;display:flex;align-items:center;padding-left:4px;color:#eef7f0;box-sizing:border-box;padding-bottom:5px}
.nub{position:absolute;left:59px;top:5px;width:5px;height:16px;background:#fff;border-radius:0 2px 2px 0}
.dot{position:absolute;left:48px;top:-8px;width:13px;height:13px;border:1.500px solid #fff;border-radius:50%;background:#e96363}
.c{display:flex;flex-direction:column;align-items:center;width:92px;margin-left:16px;height:56px;gap:1px}.e{width:2px;height:60px;margin:0 6px 0 30px;background:#777}
</style>
${['win','search','ring','tasks'].map(n=>`<task-button cell="72"><ui-icon name="${n}" w="24"></ui-icon></task-button>`).join('')}
<div class="a">${app('edge',30,32)}${app('chrome',34,34)}${app('explorer',32,26,'on multi')}${app('store',35,34,'',2,2)}${app('mail',36,29,'',1,3)}${app('netease',36,36)}${app('gear',27,27,'on',2,1)}${app('vbox',31,35,'on',6,1)}${app('vm',36,36)}${app('code',36,36)}</div>
<div class="r"><ui-icon name="plug" w="17" h="33"></ui-icon><div class="bat"><div class="g"><fit-text w="47">100%</fit-text></div><div class="nub"></div><div class="dot"></div></div>
<ui-icon name="chev" w="18" h="10" style="margin-left:10px"></ui-icon><ui-icon name="cloud" w="24" h="16" style="margin-left:15px"></ui-icon><ui-icon name="batt" w="24" h="17" style="margin-left:12px"></ui-icon><ui-icon name="wifi" w="18" style="margin-left:16px;margin-top:3px"></ui-icon><ui-icon name="sound" w="23" h="19" style="margin-left:14px"></ui-icon><fit-text w="24" style="margin:0 0 3px 11px;font-size:24px;font-family:'Noto Sans CJK SC'">英</fit-text>
<div class="c"><fit-text w="48">12:24</fit-text><fit-text w="92">2019/12/7</fit-text></div><ui-icon name="note" w="24" h="25" style="margin-left:30px"></ui-icon><div class="e"></div></div>`;
  }
});
customElements.define('desktop-screen',class extends HTMLElement{
  connectedCallback(){
    this.attachShadow({mode:'open'}).innerHTML=`<style>:host{display:flex;flex-direction:column;width:1920px;height:1080px;overflow:hidden}</style>
<window-header></window-header><guest-desktop></guest-desktop><guest-taskbar></guest-taskbar><vm-statusbar></vm-statusbar><host-taskbar></host-taskbar>`;
  }
});
</script>
</body>
</html>
